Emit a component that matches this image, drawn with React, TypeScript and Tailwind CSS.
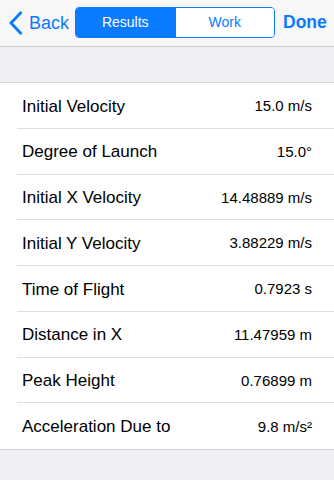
import React from "react";

const rows: [string, string][] = [
  ["Initial Velocity", "15.0 m/s"],
  ["Degree of Launch", "15.0°"],
  ["Initial X Velocity", "14.48889 m/s"],
  ["Initial Y Velocity", "3.88229 m/s"],
  ["Time of Flight", "0.7923 s"],
  ["Distance in X", "11.47959 m"],
  ["Peak Height", "0.76899 m"],
  ["Acceleration Due to", "9.8 m/s²"],
];

export default function App() {
  return (
    <div
      className="w-[334px] h-[480px] bg-[#efeff4] overflow-hidden"
      style={{ fontFamily: '"Liberation Sans", Arial, sans-serif' }}
    >
      <div className="h-[47px] bg-[#f7f7f8] border-b border-[#c8c7cc] flex items-center relative">
        <div className="flex items-center pl-[9px] text-[#0a7aff] w-[75px]">
          <svg width="14" height="24" viewBox="0 0 14 24" className="mt-[-1px]">
            <path d="M11.5 2 L2 12 L11.5 22" fill="none" stroke="#0a7aff" strokeWidth="2.8" strokeLinecap="square" strokeLinejoin="miter" />
          </svg>
          <span className="ml-[6px] text-[18px] leading-none">Back</span>
        </div>
        <div className="flex w-[200px] h-[31px] border border-[#0a7aff] rounded-[4px] overflow-hidden text-[14px] mt-[-1px]">
          <div className="flex-1 bg-[#0a7aff] text-white flex items-center justify-center">Results</div>
          <div className="flex-1 bg-white text-[#0a7aff] flex items-center justify-center border-l border-[#0a7aff]">Work</div>
        </div>
        <div className="ml-[8px] text-[17.5px] font-bold text-[#0a7aff] leading-none">Done</div>
      </div>
      <div className="h-[36px] border-b border-[#d6d6da]" />
      <div className="bg-white border-b border-[#d6d6da]">
        {rows.map(([label, value], i) => (
          <div key={i} className="pl-[17px] h-[45.75px]">
            <div
              className={`h-full flex items-center justify-between pr-[22px] pt-[2px] ${
                i < rows.length - 1 ? "border-b border-[#e0e0e3]" : ""
              }`}
            >
              <span className="pl-[5px] text-[17px] text-black">{label}</span>
              <span className="text-[15px] text-black">{value}</span>
            </div>
          </div>
        ))}
      </div>
    </div>
  );
}
